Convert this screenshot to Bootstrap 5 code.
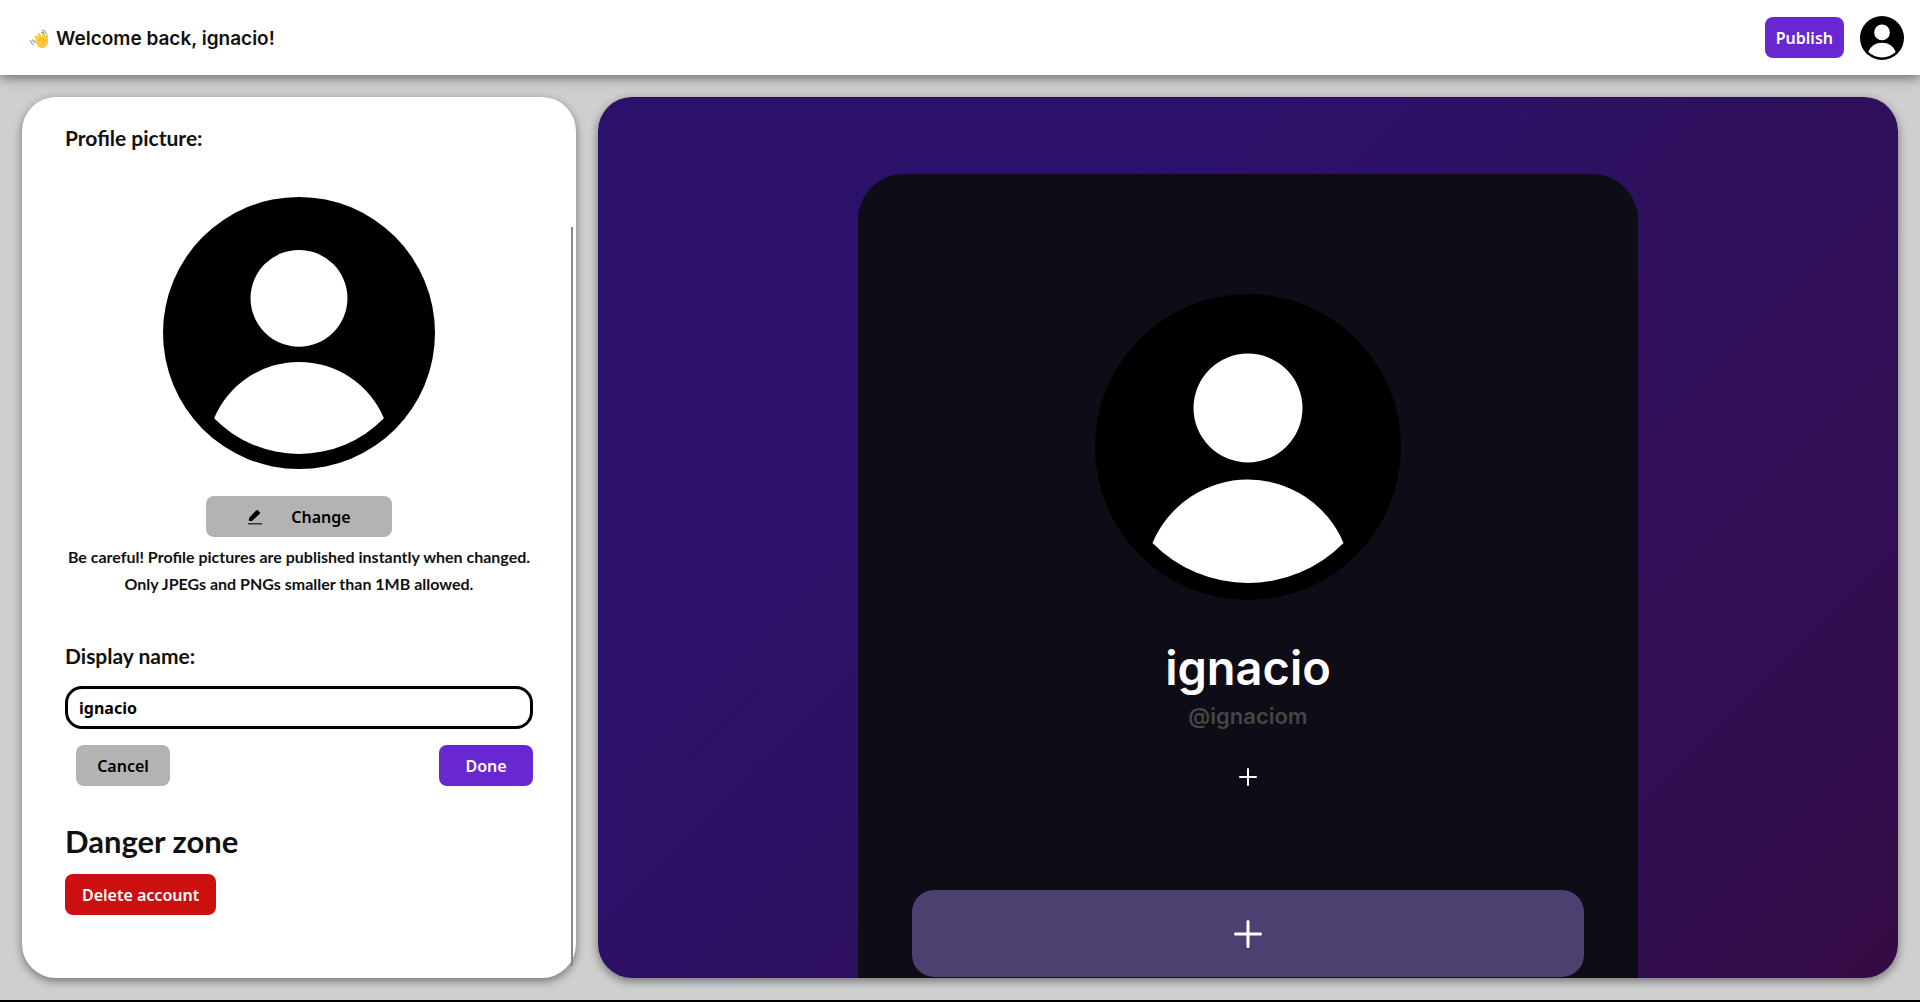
<!DOCTYPE html>
<html lang="en">
<head>
<meta charset="utf-8">
<meta name="viewport" content="width=device-width, initial-scale=1">
<title>Profile editor</title>
<link rel="stylesheet" href="https://cdn.jsdelivr.net/npm/bootstrap@5.3.0/dist/css/bootstrap.min.css">
<style>
  body { background: #cfcfcf; color: #111; font-family: Lato, sans-serif; }
  .page-shell { min-height: 100vh; border-bottom: 2px solid #000; }
  .topbar { height: 75px; padding: 0 16px 0 30px; box-shadow: 0 2px 12px rgba(0,0,0,.55); position: relative; z-index: 2; }
  .greeting { font: 600 19px/24px Inter, sans-serif; padding-top: 2px; }
  .app-btn { font: 600 16px/24px "Noto Sans", sans-serif; border: 0; border-radius: 8px; height: 41px; padding: 0 11px; }
  .app-btn.fill-violet { background: #6927d2; color: #fff; }
  .app-btn.fill-gray { background: #b3b3b3; color: #000; }
  .app-btn.fill-red { background: #cc0f0f; color: #fff; padding: 0 17px; }
  .w-action { width: 94px; }
  .w-change { width: 186px; gap: 28px; margin: 27px 0 6px; }
  .avatar-large { margin-top: 46px; }
  .workspace { padding: 22px; gap: 22px; flex: 1; min-height: 0; }
  .panel { border-radius: 34px; box-shadow: 0 3px 10px rgba(0,0,0,.45); }
  .editor { flex: 0 0 554px; padding: 28px 43px; position: relative; }
  .editor::after { content: ""; position: absolute; right: 3px; top: 130px; bottom: 12px; width: 2px; background: #8b8b8b; }
  .field-title { font-size: 21px; line-height: 26px; font-weight: 700; }
  .notice { font-size: 16px; line-height: 27px; font-weight: 700; white-space: nowrap; }
  .name-form { margin-top: 46px; }
  .name-input { height: 43px; margin: 17px 0 16px; border: 3px solid #000; border-radius: 17px; padding: 0 11px; font: 700 16px/24px "Noto Sans", sans-serif; color: #000; }
  .form-actions { padding-left: 11px; }
  .danger-title { font-size: 31px; line-height: 36px; font-weight: 700; margin: 37px 0 15px; }
  .preview { min-width: 0; flex: 1; overflow: hidden; background: linear-gradient(135deg, #2c116c 28%, #30105a 62%, #310e50 82%, #350b44 100%); padding-top: 77px; }
  .phone { width: 60%; background: #0e0c16; border-radius: 46px 46px 0 0; padding: 120px 54px 0; }
  .shown-name { font: 600 47px/60px Inter, sans-serif; color: #fff; margin: 38px 0 3px; }
  .shown-handle { font: 600 22px/30px Inter, sans-serif; color: #454545; }
  .add-social { margin: 34px 0 101px; width: 24px; height: 24px; }
  .add-link { height: 87px; border: 0; border-radius: 22px; background: #4b4070; }
</style>
</head>
<body>
<svg width="0" height="0" class="position-absolute" aria-hidden="true">
  <symbol id="avatar" viewBox="0 0 306 306">
    <circle cx="153" cy="153" r="153"/>
    <circle cx="153" cy="114" r="54.5" fill="#fff"/>
    <path d="M57.5 249A103.6 103.6 0 0 1 248.500 249A134 134 0 0 1 57.5 249Z" fill="#fff"/>
  </symbol>
</svg>
<div class="page-shell d-flex flex-column">
  <header class="topbar bg-white d-flex align-items-center justify-content-between">
    <div class="greeting d-flex align-items-center">
      <svg width="18" height="18" viewBox="0 0 36 36" class="me-2" aria-hidden="true">
        <path d="M12 27L7 22q-1-3 3-3l4 3-5-8q0-4 4-3l5 7-3-9q1-4 5-2l4 9 0-9q2-4 5-1l2 8 1-4q3-3 4 0l0 16q-3 10-12 10-7 0-12-9z" fill="#ffc83d"/>
        <path d="M18 18l3 4M20 15l4 5M24 15l3 4M24 28q1-6 8-8" fill="none" stroke="#e39a28" stroke-width="1.500"/>
        <path d="M22 5q5-3 7 3M24 1q8-1 8 7M1 20q0 8 7 10M5 19q0 4 4 7" fill="none" stroke="#4b9fd8" stroke-width="2"/>
      </svg>
      <span>Welcome back, ignacio!</span>
    </div>
    <div class="d-flex align-items-center gap-3">
      <button type="button" class="app-btn fill-violet">Publish</button>
      <svg width="44" height="44" role="img" aria-label="Account"><use href="#avatar"/></svg>
    </div>
  </header>
  <main class="workspace d-flex">
    <section class="panel editor bg-white">
      <h2 class="field-title mb-0">Profile picture:</h2>
      <div class="d-flex flex-column align-items-center text-center">
        <svg width="272" height="272" class="avatar-large" role="img" aria-label="Profile picture"><use href="#avatar"/></svg>
        <button type="button" class="app-btn fill-gray w-change d-flex align-items-center justify-content-center">
          <svg width="16" height="16" viewBox="0 0 16 16" aria-hidden="true"><path d="M2 12V9L9 1.500q1-1 2 0l1.500 1.500q1 1 0 2L5 12z"/><path d="M1 14h14v1.500H1z" fill="#333"/></svg>
          <span>Change</span>
        </button>
        <p class="notice mb-0">Be careful! Profile pictures are published instantly when changed.<br>Only JPEGs and PNGs smaller than 1MB allowed.</p>
      </div>
      <form class="name-form">
        <label for="displayName" class="field-title d-block">Display name:</label>
        <input id="displayName" type="text" class="name-input w-100" value="ignacio">
        <div class="form-actions d-flex justify-content-between">
          <button type="button" class="app-btn fill-gray w-action">Cancel</button>
          <button type="button" class="app-btn fill-violet w-action">Done</button>
        </div>
      </form>
      <h1 class="danger-title">Danger zone</h1>
      <button type="button" class="app-btn fill-red">Delete account</button>
    </section>
    <section class="panel preview d-flex justify-content-center">
      <div class="phone d-flex flex-column align-items-center">
        <svg width="306" height="306" role="img" aria-label="Profile picture"><use href="#avatar"/></svg>
        <div class="shown-name">ignacio</div>
        <div class="shown-handle">@ignaciom</div>
        <button type="button" class="add-social btn p-0 border-0 d-flex align-items-center justify-content-center" aria-label="Add social">
          <svg width="18" height="18" viewBox="0 0 18 18"><path d="M9 1v16M1 9h16" stroke="#fff" stroke-width="2" stroke-linecap="round"/></svg>
        </button>
        <button type="button" class="add-link w-100" aria-label="Add link">
          <svg width="28" height="28" viewBox="0 0 28 28"><path d="M14 1.500v25M1.500 14h25" stroke="#fff" stroke-width="3" stroke-linecap="round"/></svg>
        </button>
      </div>
    </section>
  </main>
</div>
<script src="https://cdn.jsdelivr.net/npm/bootstrap@5.3.0/dist/js/bootstrap.bundle.min.js"></script>
</body>
</html>
